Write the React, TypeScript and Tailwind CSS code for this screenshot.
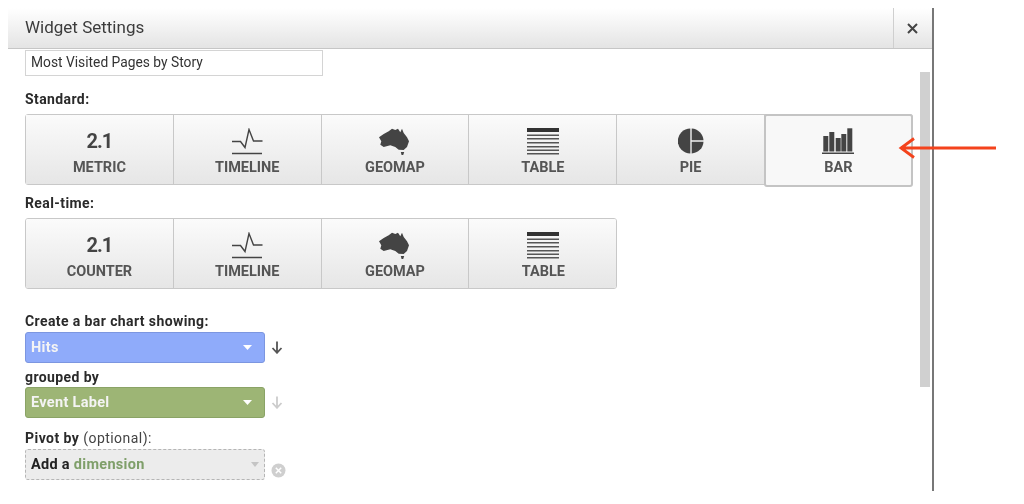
const MetricIcon = () => (
  <span className="text-[20px] leading-[28px] font-bold tracking-[-1px] text-[#444]">2.1</span>
);

const TimelineIcon = () => (
  <svg width="32" height="27" viewBox="0 0 32 27" fill="none" stroke="#444">
    <path d="M1 13.500h8.500l4.500 6 4-18 4.500 11.500h9" strokeWidth="1.400" />
    <path d="M1 25.500h30" strokeWidth="1.500" />
  </svg>
);

const GeomapIcon = () => (
  <svg width="31" height="27" viewBox="0 0 31 27" fill="#444">
    <path d="M0 9.300 4.700 6 9.700 3.300 13 .7 16.300 2 19 .7 21.300 4.300 23 .7 24.700 5 28 9.300 30 13.300 28 19 24.700 22 19.700 21.700 16.300 19 11.300 17.300 4.700 19 1.300 16.700 2.300 13.300z" />
    <path d="M21.800 24h3.400L24.200 27h-1.600z" />
  </svg>
);

const TableIcon = () => (
  <svg width="32" height="27" viewBox="0 0 32 27" fill="#555">
    <rect x="0" y="0" width="32" height="4" fill="#333" />
    {[6.500, 10, 14, 18, 21.500, 25].map(y => (
      <rect key={y} x="0" y={y} width="32" height="1.500" />
    ))}
  </svg>
);

const PieIcon = () => (
  <svg width="26" height="26" viewBox="0 0 26 26" fill="#444">
    <path d="M12.300 0.500v25a12.500 12.500 0 0 1 0-25z" />
    <path d="M13.700 0.500a12.500 12.500 0 0 1 11.800 11.800h-11.800z" />
    <path d="M13.700 13.700h11.800a12.500 12.500 0 0 1-11.800 11.800z" />
  </svg>
);

const BarIcon = () => (
  <svg width="32" height="27" viewBox="0 0 32 27" fill="#444">
    <rect x="1.300" y="8" width="5" height="15.500" />
    <rect x="7.300" y="4" width="5" height="19.500" />
    <rect x="13.700" y="10" width="5" height="13.500" />
    <rect x="19.300" y="6" width="5" height="17.500" />
    <rect x="25.300" y="0.300" width="5" height="23.200" />
    <rect x="0" y="24.500" width="32" height="1.500" />
  </svg>
);

const ChartButton = ({ icon, label, active }: { icon: React.ReactNode; label: string; active?: boolean }) => (
  <div
    className={
      active
        ? "flex-1 h-[73px] -mt-px -ml-px -mr-px flex flex-col items-center pt-[12px] bg-[#f8f8f8] border-2 border-[#c4c4c4] rounded-[3px]"
        : "w-[147.800px] shrink-0 h-full flex flex-col items-center pt-[12px] bg-gradient-to-b from-[#fbfbfb] to-[#e6e6e6] border-r border-[#c8c8c8] last:border-r-0"
    }
  >
    <div className={active ? "h-[28px] -mt-px flex items-center justify-center" : "h-[28px] flex items-center justify-center"}>
      {icon}
    </div>
    <div className="mt-[4px] text-[14.500px] leading-[18px] font-bold text-[#555]">{label}</div>
  </div>
);

const Label = ({ children }: { children: React.ReactNode }) => (
  <div className="text-[14px] leading-[15px] font-bold tracking-[0.4px] text-[#2a2a2a]">{children}</div>
);

const Caret = ({ color, size }: { color: string; size: number }) => (
  <svg width={size} height="5" viewBox="0 0 10 5" fill={color} preserveAspectRatio="none">
    <path d="M0 0h10L5 5z" />
  </svg>
);

const ArrowDown = ({ color }: { color: string }) => (
  <svg width="12" height="13" viewBox="0 0 12 13" fill="none" stroke={color} strokeWidth="1.800">
    <path d="M6 0.500v11M1.500 7l4.500 4.800L10.500 7" />
  </svg>
);

const Select = ({ label, className }: { label: string; className: string }) => (
  <div className={"w-[240px] h-[31px] rounded-[3px] border flex items-center justify-between pl-[5px] pr-[12px] " + className}>
    <span className="pt-[1px] text-[14.500px] tracking-[0.3px] font-bold text-[#f4f4f4]">{label}</span>
    <Caret color="#ffffff" size={9} />
  </div>
);

export default function App() {
  return (
    <div className="relative w-[1024px] h-[504px] bg-white overflow-hidden blur-[0.5px]" style={{ fontFamily: "Roboto, sans-serif" }}>
      <div className="ml-2 mt-2 w-[926px] h-[483px] border-r-2 border-[#777] flex flex-col">
        {/* Header */}
        <div className="h-[41px] shrink-0 flex justify-between bg-gradient-to-b from-white to-[#e4e4e4] border-b border-[#c6c6c6]">
          <div className="pl-[17px] pt-[9px] text-[17px] leading-[21px] text-[#3c3c3c]">Widget Settings</div>
          <div className="w-[39px] pr-px border-l border-[#cfcfcf] flex items-center justify-center">
            <svg width="11" height="11" viewBox="0 0 11 11" stroke="#444" strokeWidth="2">
              <path d="M1 1l9 9M10 1l-9 9" />
            </svg>
          </div>
        </div>

        <div className="flex-1 flex">
          {/* Form */}
          <div className="w-[912px] pl-[17px]">
            <div className="mt-[1px] w-[298px] h-[26px] border border-[#d4d4d4] pl-[5px] pb-[1px] flex items-center text-[13.800px] text-[#333]">
              Most Visited Pages by Story
            </div>

            <div className="mt-[16px]">
              <Label>Standard:</Label>
            </div>
            <div className="mt-[7px] w-[888px] h-[71px] flex border border-[#c8c8c8] rounded-[3px]">
              <ChartButton icon={<MetricIcon />} label="METRIC" />
              <ChartButton icon={<TimelineIcon />} label="TIMELINE" />
              <ChartButton icon={<GeomapIcon />} label="GEOMAP" />
              <ChartButton icon={<TableIcon />} label="TABLE" />
              <ChartButton icon={<PieIcon />} label="PIE" />
              <ChartButton icon={<BarIcon />} label="BAR" active />
            </div>

            <div className="mt-[11px]">
              <Label>Real-time:</Label>
            </div>
            <div className="mt-[7px] w-[592px] h-[71px] flex border border-[#c8c8c8] rounded-[3px] overflow-hidden">
              <ChartButton icon={<MetricIcon />} label="COUNTER" />
              <ChartButton icon={<TimelineIcon />} label="TIMELINE" />
              <ChartButton icon={<GeomapIcon />} label="GEOMAP" />
              <ChartButton icon={<TableIcon />} label="TABLE" />
            </div>

            <div className="mt-[25px]">
              <Label>Create a bar chart showing:</Label>
            </div>
            <div className="mt-[3px] flex items-center gap-[6px]">
              <Select label="Hits" className="bg-[#8fabfa] border-[#7c96e0]" />
              <ArrowDown color="#555" />
            </div>

            <div className="mt-[7px]">
              <Label>grouped by</Label>
            </div>
            <div className="mt-[2px] flex items-center gap-[6px]">
              <Select label="Event Label" className="bg-[#9db575] border-[#8aa366]" />
              <ArrowDown color="#ccc" />
            </div>

            <div className="mt-[13px] text-[14px] leading-[15px] tracking-[0.45px] text-[#444]">
              <span className="font-bold text-[#2a2a2a]">Pivot by</span> (optional):
            </div>
            <div className="mt-[3px] flex items-end gap-[6px]">
              <div className="w-[240px] h-[31px] rounded-[3px] border border-dashed border-[#b5b5b5] bg-[#ececec] flex items-center justify-between pl-[5px] pr-[5px]">
                <span className="text-[14.500px] tracking-[0.3px] font-bold text-[#222]">
                  Add a <span className="text-[#7f9f6a]">dimension</span>
                </span>
                <Caret color="#c4c4c4" size={8} />
              </div>
              <svg width="15" height="15" viewBox="0 0 15 15" className="mb-[2px]">
                <circle cx="7.500" cy="7.500" r="7" fill="#cfcfcf" />
                <path d="M4.800 4.800l5.400 5.400M10.200 4.800l-5.400 5.400" stroke="#fff" strokeWidth="1.500" />
              </svg>
            </div>
          </div>

          {/* Scrollbar */}
          <div className="w-[10px] h-[315px] mt-[23px] bg-[#d0d0d0]" />
        </div>
      </div>

      {/* Annotation arrow */}
      <svg width="100" height="24" viewBox="0 0 100 24" fill="none" stroke="#f4431c" strokeWidth="2.800" className="absolute left-[898px] top-[136px]">
        <path d="M98 12H3M16 2.500 3 12l13 9.500" />
      </svg>
    </div>
  );
}
